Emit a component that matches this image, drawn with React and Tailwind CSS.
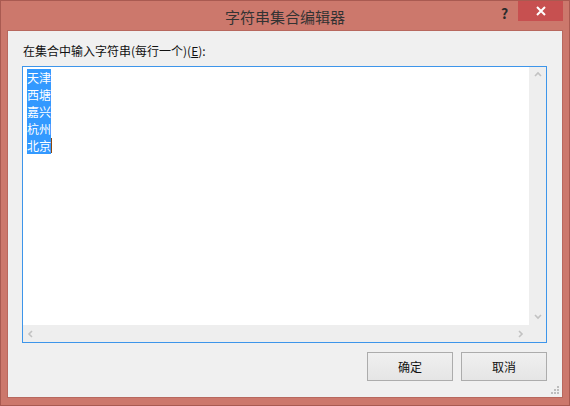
import React from 'react';

const items = ['天津', '西塘', '嘉兴', '杭州', '北京'];

const Chevron = ({ dir }) => {
  const pts = {
    up: '1,5 4,2 7,5',
    down: '1,2 4,5 7,2',
    left: '5,1 2,4 5,7',
    right: '2,1 5,4 2,7',
  }[dir];
  return (
    <svg width="8" height="8" viewBox="0 0 8 8">
      <polyline points={pts} fill="none" stroke="#c2c2c2" strokeWidth="1.6" />
    </svg>
  );
};

const App = () => {
  return (
    <div
      className="w-[570px] h-[406px] bg-[#cc786c] border border-[#a95a51] flex flex-col"
      style={{ fontFamily: '"Microsoft YaHei", "Noto Sans CJK SC", sans-serif' }}
    >
      {/* title bar */}
      <div className="h-[29px] relative flex items-center justify-center shrink-0">
        <span className="text-[15px] text-[#333] leading-none mt-[1px]">字符串集合编辑器</span>
        <span className="absolute left-[500px] top-[5px] text-[14px] font-bold text-[#2b2b2b] leading-none">?</span>
        <div className="absolute right-[6px] top-0 w-[45px] h-[20px] bg-[#c75050] flex items-center justify-center">
          <svg width="10" height="10" viewBox="0 0 10 10">
            <path d="M1 1 L9 9 M9 1 L1 9" stroke="#fff" strokeWidth="2" />
          </svg>
        </div>
      </div>

      {/* client area */}
      <div className="relative mx-[6px] mb-[7px] flex-1 bg-[#f0f0f0] border border-[#b8685e] flex flex-col pl-[14px] pr-[15px] pt-[12px]">
        <div className="text-[12px] text-[#111] leading-[16px] pl-[1px]">
          在集合中输入字符串(每行一个)(<span className="underline">E</span>):
        </div>

        <div className="mt-[7px] h-[277px] border border-solid border-[#3d95ea] bg-white flex flex-col">
          <div className="flex flex-1 min-h-0">
            <div className="flex-1 pl-[4px] pt-[2px] flex flex-col items-start">
              {items.map((t, i) => (
                <div key={t} className="h-[17px] flex items-center">
                  <span className="bg-[#3399ff] text-white text-[12px] leading-[17px] h-[17px]">{t}</span>
                  {i === items.length - 1 && <span className="w-[1px] h-[15px] bg-[#8a4a10]" />}
                </div>
              ))}
            </div>
            <div className="w-[17px] bg-[#eeeeee] flex flex-col justify-between items-center py-[4px]">
              <Chevron dir="up" />
              <Chevron dir="down" />
            </div>
          </div>
          <div className="h-[17px] flex">
            <div className="flex-1 bg-[#eeeeee] flex justify-between items-center px-[4px]">
              <Chevron dir="left" />
              <Chevron dir="right" />
            </div>
            <div className="w-[17px] bg-[#eeeeee]" />
          </div>
        </div>

        <div className="mt-[9px] flex justify-end gap-[8px]">
          <button className="w-[86px] h-[29px] border border-[#acacac] bg-gradient-to-b from-[#f0f0f0] to-[#e5e5e5] text-[12px] text-[#111]">
            确定
          </button>
          <button className="w-[86px] h-[29px] border border-[#acacac] bg-gradient-to-b from-[#f0f0f0] to-[#e5e5e5] text-[12px] text-[#111]">
            取消
          </button>
        </div>

        {/* size grip */}
        <svg className="absolute right-[2px] bottom-[2px]" width="9" height="9" viewBox="0 0 9 9">
          {[[6, 0], [6, 3], [3, 3], [6, 6], [3, 6], [0, 6]].map(([x, y]) => (
            <rect key={`${x}-${y}`} x={x} y={y} width="2" height="2" fill="#bdbdbd" />
          ))}
        </svg>
      </div>
    </div>
  );
};

export default App;
